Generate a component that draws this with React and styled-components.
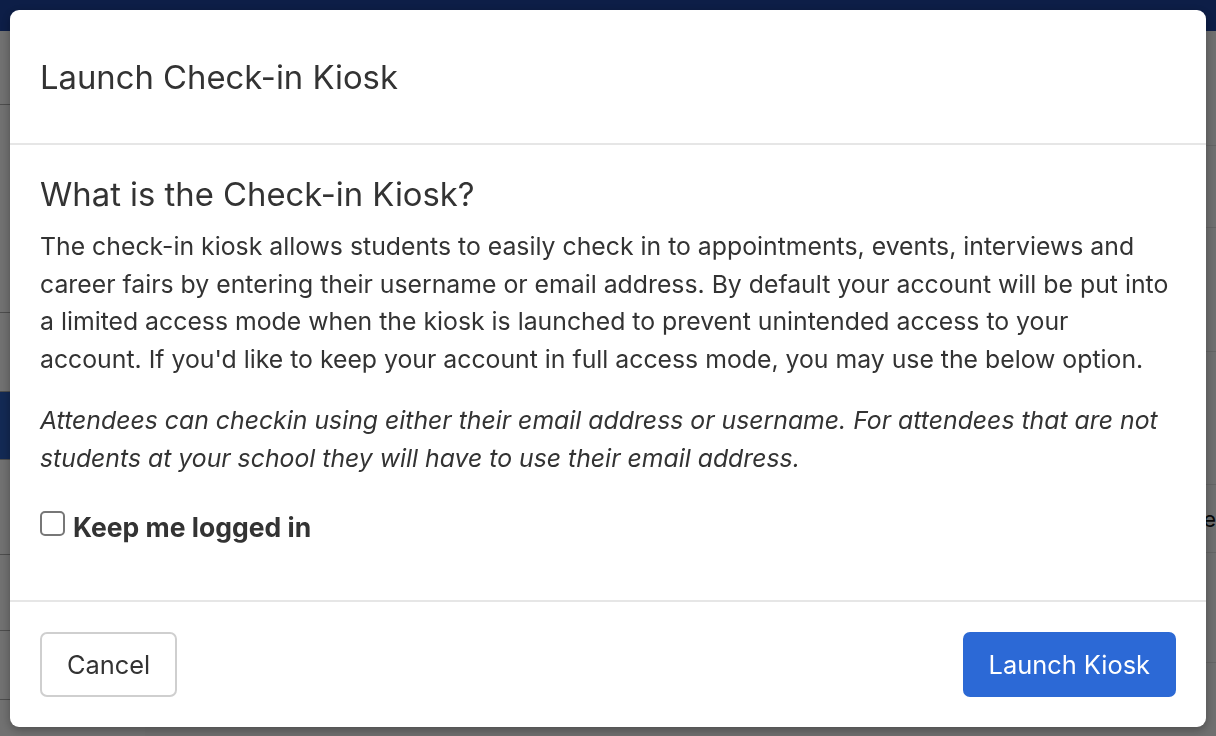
import React, { useState } from "react";
import styled, { createGlobalStyle } from "styled-components";

const GlobalStyle = createGlobalStyle`
  * { box-sizing: border-box; }
  html, body {
    margin: 0;
    padding: 0;
    height: 100%;
    overflow: hidden;
    font-family: Inter, "Noto Sans", "Liberation Sans", sans-serif;
    color: #333;
  }
`;

// page behind the dialog
const Page = styled.div`
  width: 1216px;
  height: 736px;
  display: flex;
  flex-direction: column;
  background: #f4f4f4;
`;

const TopBar = styled.div`
  height: 31px;
  flex-shrink: 0;
  background: #1a3c8e;
`;

const PageBody = styled.div`
  flex: 1;
  display: flex;
`;

const Sidebar = styled.div`
  width: 145px;
  display: flex;
  flex-direction: column;
  background: #e2e2e2;
`;

const SideItem = styled.div`
  height: ${(p) => p.h}px;
  border-bottom: 1px solid #9a9a9a;
  background: ${(p) => (p.active ? "#2653a8" : "transparent")};
`;

const Content = styled.div`
  flex: 1;
  display: flex;
  flex-direction: column;
  background: #dedede;
`;

const ContentRow = styled.div`
  height: ${(p) => p.h}px;
  border-bottom: 1px solid #c8c8c8;
  display: flex;
  align-items: center;
  justify-content: flex-end;
  font-size: 22px;
  color: #111;
  overflow: hidden;
  white-space: nowrap;
`;

const Overlay = styled.div`
  position: fixed;
  inset: 0;
  background: rgba(0, 0, 0, 0.5);
  padding: 10px 10px 9px 10px;
  display: flex;
`;

const Dialog = styled.div`
  flex: 1;
  background: #fff;
  border-radius: 9px;
  display: flex;
  flex-direction: column;
  box-shadow: 0 3px 10px rgba(0, 0, 0, 0.3);
`;

const Header = styled.div`
  height: 135px;
  padding: 0 30px;
  display: flex;
  align-items: center;
  border-bottom: 2px solid #e6e6e6;
`;

const Title = styled.h1`
  margin: 0;
  font-size: 32.8px;
  font-weight: 400;
  color: #333;
`;

const Body = styled.div`
  flex: 1;
  padding: 31px 30px 0 30px;
`;

const Heading = styled.h2`
  margin: 0 0 16px 0;
  font-size: 32.8px;
  line-height: 36px;
  font-weight: 400;
  color: #333;
`;

const Paragraph = styled.p`
  margin: 0 0 24px 0;
  font-size: 24.8px;
  line-height: 37.6px;
  font-style: ${(p) => (p.italic ? "italic" : "normal")};
  color: #333;
`;

const CheckRow = styled.label`
  display: flex;
  align-items: center;
  gap: 8px;
  margin-top: 33px;
  cursor: pointer;
`;

const Box = styled.input`
  appearance: none;
  width: 25px;
  height: 25px;
  margin: 0;
  border: 2px solid #777;
  border-radius: 5px;
  background: #fff;
  position: relative;
  top: -3px;
  &:checked {
    background: #2d6ad6;
    border-color: #2d6ad6;
  }
`;

const CheckLabel = styled.span`
  font-size: 26.5px;
  font-weight: 700;
  color: #333;
`;

const Footer = styled.div`
  height: 127px;
  border-top: 2px solid #e6e6e6;
  padding: 0 30px;
  display: flex;
  align-items: center;
  justify-content: space-between;
`;

const Button = styled.button`
  height: 65px;
  padding: 0 ${(p) => (p.primary ? 24 : 25)}px;
  border-radius: 7px;
  font-family: inherit;
  font-size: 25.4px;
  font-weight: 400;
  cursor: pointer;
  border: 2px solid ${(p) => (p.primary ? "#2c69d4" : "#cfcfcf")};
  background: ${(p) => (p.primary ? "#2c69d6" : "#fff")};
  color: ${(p) => (p.primary ? "#fff" : "#333")};
`;

export default function App() {
  const [keep, setKeep] = useState(false);

  return (
    <>
      <GlobalStyle />
      <Page>
        <TopBar />
        <PageBody>
          <Sidebar>
            <SideItem h={74} />
            <SideItem h={208} />
            <SideItem h={79} />
            <SideItem h={68} active />
            <SideItem h={95} />
            <SideItem h={76} />
            <SideItem h={69} />
          </Sidebar>
          <Content>
            <ContentRow h={115} />
            <ContentRow h={82} />
            <ContentRow h={124} />
            <ContentRow h={133} />
            <ContentRow h={68}>Se</ContentRow>
            <ContentRow h={110} />
          </Content>
        </PageBody>
      </Page>

      <Overlay>
        <Dialog>
          <Header>
            <Title>Launch Check-in Kiosk</Title>
          </Header>
          <Body>
            <Heading>What is the Check-in Kiosk?</Heading>
            <Paragraph>
              The check-in kiosk allows students to easily check in to appointments, events,
              interviews and career fairs by entering their username or email address. By default
              your account will be put into a limited access mode when the kiosk is launched to
              prevent unintended access to your account. If you'd like to keep your account in full
              access mode, you may use the below option.
            </Paragraph>
            <Paragraph italic>
              Attendees can checkin using either their email address or username. For attendees
              that are not students at your school they will have to use their email address.
            </Paragraph>
            <CheckRow>
              <Box type="checkbox" checked={keep} onChange={() => setKeep(!keep)} />
              <CheckLabel>Keep me logged in</CheckLabel>
            </CheckRow>
          </Body>
          <Footer>
            <Button>Cancel</Button>
            <Button primary>Launch Kiosk</Button>
          </Footer>
        </Dialog>
      </Overlay>
    </>
  );
}
